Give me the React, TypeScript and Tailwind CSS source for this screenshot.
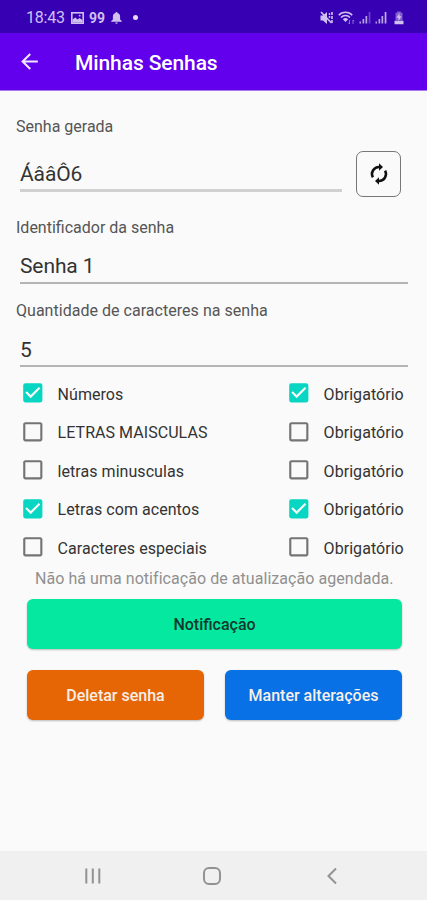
import { useState } from 'react'
import { MdArrowBack, MdCheckBox, MdCheckBoxOutlineBlank } from 'react-icons/md'

interface CharOption {
  label: string
  enabled: boolean
  required: boolean
}

const initialOptions: CharOption[] = [
  { label: 'Números', enabled: true, required: true },
  { label: 'LETRAS MAISCULAS', enabled: false, required: false },
  { label: 'letras minusculas', enabled: false, required: false },
  { label: 'Letras com acentos', enabled: true, required: true },
  { label: 'Caracteres especiais', enabled: false, required: false },
]

function StatusBar() {
  return (
    <div className="flex h-[33px] shrink-0 items-center bg-[#3700b3] pl-[26px] pr-[23px] pt-[2px] text-[#cfc0f0]">
      <span className="w-[44px] text-[16px] leading-none tracking-[-0.2px]">18:43</span>
      <svg width="13" height="12" viewBox="0 0 13 12" fill="none" stroke="currentColor" className="ml-px">
        <rect x="0.8" y="0.8" width="11.4" height="10.4" strokeWidth="1.6" />
        <path d="M1.5 10.5v-3l2.8-2 2.2 2 2-1.5 3 2v2.5z" fill="currentColor" stroke="none" />
        <circle cx="8.7" cy="3.7" r="0.9" fill="currentColor" stroke="none" />
      </svg>
      <span className="ml-[5px] w-[16px] text-[14px] font-bold leading-none">99</span>
      <svg width="11" height="12" viewBox="0 0 11 12" fill="currentColor" className="ml-[6px]">
        <path d="M5.5 0c.7 0 1 .4 1 1 1.7.4 2.6 1.8 2.6 3.6v3L10.8 9v.8H.2V9l1.7-1.4v-3C1.9 2.8 2.8 1.4 4.5 1c0-.6.3-1 1-1zM4.2 10.5h2.6a1.3 1.3 0 0 1-2.6 0z" />
      </svg>
      <span className="ml-[11px] h-[5px] w-[5px] rounded-full bg-[#e5dbfa]" />

      <svg width="14" height="14" viewBox="0 0 14 14" fill="currentColor" className="ml-auto">
        <path d="M0.5 4.5h2.5l4-3.5v12l-4-3.5h-2.5z" />
        <path d="M1 1l10.5 11" stroke="currentColor" strokeWidth="1.6" />
        <path d="M12 1v12" stroke="currentColor" strokeWidth="1.6" strokeDasharray="3 1" />
        <path d="M9.5 2v6" stroke="currentColor" strokeWidth="1.4" strokeDasharray="2 1" />
      </svg>
      <svg width="17" height="14" viewBox="0 0 17 14" fill="none" stroke="currentColor" className="ml-[4px]">
        <path d="M0.8 4.2C4 .4 11 .4 14.2 4.2M3 6.5c2.4-2.6 6.6-2.6 9 0" strokeWidth="1.5" />
        <path d="M4.8 8.2c1.6-1.5 3.8-1.5 5.4 0L7.5 11z" fill="currentColor" stroke="none" />
        <path d="M11.5 9v4M10.2 11.7l1.3 1.3M15 13V9M16.2 10.3L15 9" strokeWidth="0.9" opacity="0.6" />
      </svg>
      <SignalBars dim />
      <SignalBars />
      <svg width="10" height="14" viewBox="0 0 10 14" fill="currentColor" className="ml-[7px]">
        <path d="M3.2 0.5h3.6v1.3h1.7v7.7h-7v-7.7h1.7z" opacity="0.5" />
        <path d="M5.5 2L2.5 6.8h2v3.2l3-4.8h-2zM0.5 9.8h9v3.4h-9z" />
      </svg>
    </div>
  )
}

function SignalBars({ dim }: { dim?: boolean }) {
  return (
    <svg width="12" height="13" viewBox="0 0 12 13" fill="currentColor" className="ml-[4px]">
      <path d="M0.5 10.5h1.5v2h-1.5zM3.5 8h1.7v4.5h-1.7zM6.5 5h1.7v7.5h-1.7z" opacity="0.85" />
      <path d="M9.7 1h1.7v11.5h-1.7z" opacity={dim ? 0.35 : 0.9} />
    </svg>
  )
}

function RenewIcon() {
  return (
    <svg width="24" height="24" viewBox="0 0 24 24" fill="none" stroke="currentColor" strokeWidth="2.5">
      <path d="M12.5 5A7 7 0 0 0 5.9 15.400M11.500 19A7 7 0 0 0 18.100 8.600" />
      <path d="M12 1.300L16 5l-4 3.700zM12 15.300L8 19l4 3.700z" fill="currentColor" stroke="none" />
    </svg>
  )
}

function CheckOption({ checked, label, onToggle, className }: { checked: boolean; label: string; onToggle: () => void; className?: string }) {
  return (
    <button type="button" role="checkbox" aria-checked={checked} onClick={onToggle} className={`flex items-center text-left ${className ?? ''}`}>
      {checked ? <MdCheckBox size={25.6} className="text-[#06d6c2]" /> : <MdCheckBoxOutlineBlank size={25.6} className="text-[#747474]" />}
      <span className="ml-[12px] whitespace-nowrap pt-[2.5px] tracking-[0.05px]">{label}</span>
    </button>
  )
}

export default function App() {
  const [options, setOptions] = useState(initialOptions)

  function toggle(index: number, key: 'enabled' | 'required') {
    setOptions((rows) => rows.map((row, i) => (i === index ? { ...row, [key]: !row[key] } : row)))
  }

  return (
    <div className="flex h-[900px] w-[427px] flex-col overflow-hidden bg-[#fafafa] font-[Roboto,sans-serif]">
      <StatusBar />

      <header className="flex h-[58px] shrink-0 items-center border-b border-[#a77bea] bg-[#6200ee] pl-[17px] text-white">
        <MdArrowBack size={25} className="text-[#f0e6ff]" />
        <h1 className="ml-[33px] pt-[4px] text-[21px] font-medium leading-none tracking-[-0.1px]">Minhas Senhas</h1>
      </header>

      <main className="flex-1 pl-4 pr-[19px] pt-[25px] text-[#333]">
        <p className="h-[22px] text-[16px] leading-[22px] text-[#555]">Senha gerada</p>
        <div className="mt-[13px] flex justify-between pl-1 pr-[7px]">
          <div className="flex h-[41px] w-[322px] items-center border-b-[3px] border-[#d0d0d0] pt-[10px] text-[21px] tracking-[-0.1px]">ÁââÔ6</div>
          <button type="button" aria-label="Gerar senha" className="flex h-[46px] w-[45px] items-center justify-center rounded-[7px] border-[1.5px] border-[#777] text-[#111]">
            <RenewIcon />
          </button>
        </div>

        <p className="mt-[20px] h-[22px] text-[16px] leading-[22px] text-[#555]">Identificador da senha</p>
        <div className="ml-1 mt-[8px] flex h-[37px] items-center border-b-2 border-[#b4b4b4] pt-[4px] text-[21px] tracking-[-0.1px]">Senha 1</div>

        <p className="mt-[16px] h-[22px] text-[16px] leading-[22px] text-[#555] tracking-[0.03px]">Quantidade de caracteres na senha</p>
        <div className="ml-1 mt-[8px] flex h-[37px] items-center border-b-2 border-[#b4b4b4] pt-[6px] text-[21px]">5</div>

        <div className="mt-[7px] pl-1 text-[16px] leading-5">
          {options.map((option, i) => (
            <div key={option.label} className="flex h-[38.5px] items-center">
              <CheckOption checked={option.enabled} label={option.label} onToggle={() => toggle(i, 'enabled')} className="w-[266px]" />
              <CheckOption checked={option.required} label="Obrigatório" onToggle={() => toggle(i, 'required')} />
            </div>
          ))}
        </div>

        <p className="ml-[19px] whitespace-nowrap text-[16px] leading-[24px] text-[#909090] tracking-[0.05px]">Não há uma notificação de atualização agendada.</p>

        <div className="ml-[11px] mt-[8.5px] w-[375px] text-[16px] font-medium">
          <button type="button" className="h-[49.5px] w-full rounded-[6px] bg-[#05e8a0] pt-[2px] text-[#12382c] shadow-[0_1px_2px_rgba(0,0,0,0.25)]">
            Notificação
          </button>
          <div className="mt-[21.5px] flex justify-between text-[#f8efe8]">
            <button type="button" className="h-[49.5px] w-[177px] rounded-[6px] bg-[#e66605] pt-[2px] shadow-[0_1px_2px_rgba(0,0,0,0.25)]">
              Deletar senha
            </button>
            <button type="button" className="h-[49.5px] w-[177px] whitespace-nowrap rounded-[6px] bg-[#0871e5] pt-[2px] shadow-[0_1px_2px_rgba(0,0,0,0.25)]">
              Manter alterações
            </button>
          </div>
        </div>
      </main>

      <nav className="flex h-[49px] shrink-0 items-center bg-[#f0f0f0] pl-[83px] pt-px text-[#929292]">
        <svg width="20" height="18" viewBox="0 0 20 18" stroke="currentColor" strokeWidth="2">
          <path d="M3.3 1.5v15M9.8 1.5v15M16.3 1.5v15" />
        </svg>
        <svg width="20" height="20" viewBox="0 0 20 20" fill="none" stroke="currentColor" strokeWidth="2" className="ml-[99px]">
          <rect x="2" y="2" width="16" height="16" rx="5" />
        </svg>
        <svg width="12" height="18" viewBox="0 0 12 18" fill="none" stroke="currentColor" strokeWidth="2" className="ml-[104px]">
          <path d="M10 1.5L2.5 9l7.5 7.5" />
        </svg>
      </nav>
    </div>
  )
}
